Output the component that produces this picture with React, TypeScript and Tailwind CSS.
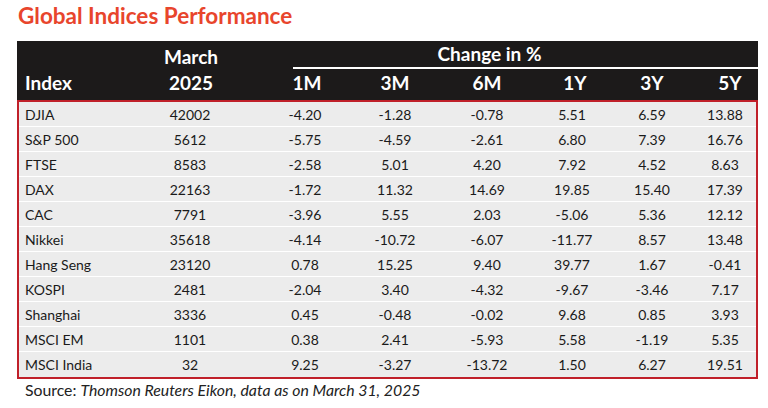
import React from "react";

const rows: string[][] = [
  ["DJIA", "42002", "-4.20", "-1.28", "-0.78", "5.51", "6.59", "13.88"],
  ["S&P 500", "5612", "-5.75", "-4.59", "-2.61", "6.80", "7.39", "16.76"],
  ["FTSE", "8583", "-2.58", "5.01", "4.20", "7.92", "4.52", "8.63"],
  ["DAX", "22163", "-1.72", "11.32", "14.69", "19.85", "15.40", "17.39"],
  ["CAC", "7791", "-3.96", "5.55", "2.03", "-5.06", "5.36", "12.12"],
  ["Nikkei", "35618", "-4.14", "-10.72", "-6.07", "-11.77", "8.57", "13.48"],
  ["Hang Seng", "23120", "0.78", "15.25", "9.40", "39.77", "1.67", "-0.41"],
  ["KOSPI", "2481", "-2.04", "3.40", "-4.32", "-9.67", "-3.46", "7.17"],
  ["Shanghai", "3336", "0.45", "-0.48", "-0.02", "9.68", "0.85", "3.93"],
  ["MSCI EM", "1101", "0.38", "2.41", "-5.93", "5.58", "-1.19", "5.35"],
  ["MSCI India", "32", "9.25", "-3.27", "-13.72", "1.50", "6.27", "19.51"],
];

const font = { fontFamily: "Lato, 'Open Sans', 'Liberation Sans', sans-serif" };

export default function App() {
  return (
    <div className="w-[768px] h-[408px] bg-white pl-[17px]" style={font}>
      <div className="h-[41px] pt-[3px] pl-[1px]">
        <div className="text-[22.5px] leading-[26px] font-bold text-[#e8452c]">
          Global Indices Performance
        </div>
      </div>

      <div className="w-[741px]">
        {/* Header */}
        <div className="grid grid-cols-[118px_110px_120px_60px_124px_46px_114px_32px_17px] grid-rows-[26px_2px_31px] bg-[#1c1a1a] text-white font-bold text-[19px]">
          <div className="col-start-1 row-start-1 row-span-3 flex items-end pl-[8px] pb-[4px] leading-[27px]">
            Index
          </div>
          <div className="col-start-2 row-start-1 row-span-3 flex flex-col items-center justify-end pb-[4px] leading-[26px] pl-[2px]">
            <span>March</span>
            <span>2025</span>
          </div>
          <div className="col-start-3 col-span-7 row-start-1 ml-[48px] pr-[72px] flex items-start justify-center leading-[26px]">
            Change in %
          </div>
          <div className="col-start-3 col-span-7 row-start-2 ml-[48px] bg-white" />
          <div className="col-start-3 row-start-3 flex items-start justify-center pl-[4px] leading-[27px]">1M</div>
          <div className="col-start-4 row-start-3 flex items-start justify-center leading-[27px]">3M</div>
          <div className="col-start-5 row-start-3 flex items-start justify-center leading-[27px]">6M</div>
          <div className="col-start-6 row-start-3 flex items-start justify-center pl-[6px] leading-[27px]">1Y</div>
          <div className="col-start-7 row-start-3 flex items-start justify-center leading-[27px]">3Y</div>
          <div className="col-start-8 row-start-3 flex items-start justify-center pl-[10px] leading-[27px] whitespace-nowrap">5Y</div>
        </div>

        {/* Body */}
        <div className="border-2 border-[#c0202a] bg-white text-[14px] text-[#1a1a1a]">
          {rows.map((r, i) => (
            <div
              key={i}
              className={
                "grid grid-cols-[116px_110px_120px_60px_124px_46px_114px_32px_15px] h-[25px] bg-[#ececec] items-center " +
                (i < rows.length - 1 ? "border-b border-white" : "")
              }
            >
              <div className="pl-[6px] whitespace-nowrap">{r[0]}</div>
              {r.slice(1).map((v, j) => (
                <div key={j} className="text-center whitespace-nowrap flex justify-center">
                  {v}
                </div>
              ))}
              <div />
            </div>
          ))}
        </div>

        <div className="mt-[1px] pl-[8px] text-[15.8px] leading-[20px] text-[#222]">
          Source: <span className="italic">Thomson Reuters Eikon, data as on March 31, 2025</span>
        </div>
      </div>
    </div>
  );
}
